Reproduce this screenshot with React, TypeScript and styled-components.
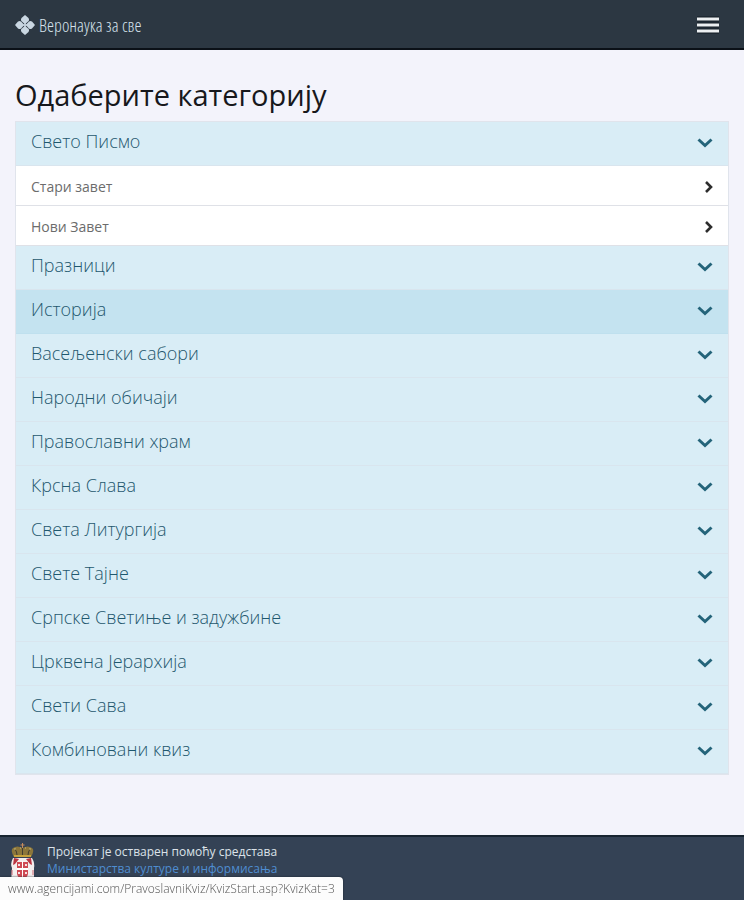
import React, { useState } from "react";
import styled, { createGlobalStyle } from "styled-components";

const GlobalStyle = createGlobalStyle`
  *, *::before, *::after { box-sizing: border-box; }
  body {
    margin: 0;
    background: #f3f3fb;
    color: #17181c;
    font-family: "Open Sans", "Noto Sans", sans-serif;
  }
  button { font: inherit; }
`;

const Page = styled.div`
  display: flex;
  flex-direction: column;
  min-height: 100vh;
`;

const Navbar = styled.header`
  display: flex;
  align-items: center;
  justify-content: space-between;
  height: 50px;
  padding: 2px 14px 0 15px;
  background: #2c3742;
  border-bottom: 2px solid #0b1017;
`;

const Brand = styled.a`
  display: flex;
  align-items: center;
  gap: 4px;
  color: #d5e1eb;
  font-family: "Open Sans Condensed Light", "Open Sans Condensed", "Open Sans", sans-serif;
  font-size: 18px;
  font-weight: 300;
  line-height: 20px;
  text-decoration: none;
  white-space: nowrap;
`;

const MenuButton = styled.button`
  display: flex;
  padding: 8px 10px;
  border: 0;
  background: none;
  cursor: pointer;
`;

const Main = styled.main`
  flex: 1;
  padding: 25px 15px 60px;
`;

const Title = styled.h1`
  margin: 0 0 6px;
  font-size: 29px;
  font-weight: 400;
  line-height: 40px;
`;

const Categories = styled.ul`
  margin: 0;
  padding: 0;
  border: 1px solid #e0e4ec;
  list-style: none;
`;

const Topics = styled.ul`
  margin: 0;
  padding: 0;
  list-style: none;
`;

const CategoryButton = styled.button<{ $active: boolean }>`
  display: flex;
  align-items: center;
  justify-content: space-between;
  width: 100%;
  height: 44px;
  padding: 0 15px 5px;
  border: 0;
  border-bottom: 1px solid ${(p) => (p.$active ? "#bfe0ee" : "#d9e5ee")};
  background: ${(p) => (p.$active ? "#c4e3f0" : "#d9edf6")};
  color: #1f586e;
  font-size: 18px;
  font-weight: 300;
  line-height: 24px;
  text-align: left;
  cursor: pointer;

  svg { color: #24647a; margin-top: 4px; }
`;

const TopicLink = styled.a`
  display: flex;
  align-items: center;
  justify-content: space-between;
  height: 40px;
  padding: 2px 15px 0;
  border-bottom: 1px solid #dfe1e7;
  background: #fff;
  color: #6c6c6c;
  font-size: 14px;
  line-height: 20px;
  text-decoration: none;

  svg { color: #2d2d2d; }
`;

const Footer = styled.footer`
  display: flex;
  align-items: flex-start;
  gap: 12px;
  height: 65px;
  padding: 6px 10px 0;
  border-top: 2px solid #172431;
  background: #344255;
  color: #dce2e9;
  font-size: 12px;
  line-height: 17px;

  p { margin: 0; }
  a { color: #4f8dd1; text-decoration: none; }
`;

const StatusBar = styled.div`
  position: fixed;
  left: 0;
  bottom: 0;
  height: 23px;
  padding: 0 8px;
  border-radius: 0 4px 0 0;
  background: #fcfcfc;
  box-shadow: 0 0 2px #18222d;
  color: #555;
  font-size: 12px;
  font-weight: 300;
  line-height: 23px;
  white-space: nowrap;
`;

const Cross = () => (
  <svg width="20" height="20" viewBox="0 0 20 20" aria-hidden="true">
    <g fill="#c9d6e1">
      <path d="M10 0 13.500 3Q15 5.500 12.500 7L10.600 8.800H9.400L7.500 7Q5 5.500 6.500 3Z" />
      <path d="M10 20 13.500 17Q15 14.500 12.500 13L10.600 11.200H9.400L7.500 13Q5 14.500 6.500 17Z" />
      <path d="M0 10 3 6.500Q5.500 5 7 7.500L8.800 9.400V10.600L7 12.500Q5.500 15 3 13.500Z" />
      <path d="M20 10 17 6.500Q14.500 5 13 7.500L11.200 9.400V10.600L13 12.500Q14.500 15 17 13.500Z" />
      <path d="M9.300 7h1.400v2.300H13v1.400h-2.300V13H9.300v-2.300H7V9.300h2.300Z" />
    </g>
  </svg>
);

const MenuIcon = () => (
  <svg width="24" height="20" viewBox="0 0 24 20" aria-hidden="true">
    <path d="M1 4h22M1 10h22M1 16h22" stroke="#111a22" strokeWidth="5" />
    <path d="M1 4h22M1 10h22M1 16h22" stroke="#edf0f2" strokeWidth="3" />
  </svg>
);

const ChevronDown = () => (
  <svg width="16" height="10" viewBox="0 0 16 10" fill="none" aria-hidden="true">
    <path d="m1.5 1.5 6.5 6 6.5-6" stroke="currentColor" strokeWidth="3" />
  </svg>
);

const ChevronRight = () => (
  <svg width="9" height="14" viewBox="0 0 9 14" fill="none" aria-hidden="true">
    <path d="m2 2 5 5-5 5" stroke="currentColor" strokeWidth="2.6" />
  </svg>
);

const Arms = () => (
  <svg width="25" height="40" viewBox="0 0 25 40" aria-hidden="true">
    <path d="M3 15Q0 21 2 25L1 40H24V25Q25 20 22 15Z" fill="#f4eeee" />
    <path d="m4 15 5 1-4 5-2 1Zm17 0-5 1 4 5 2 1Z" fill="#b93642" />
    <path d="M7 19H18V31Q17 35 12.500 38Q8 35 7 31Z" fill="#cf4a54" />
    <path d="M12 18h1v7h5v2h-5v11h-1V27H7v-2h5Z" fill="#fff" />
    <path d="M8 21h2v2H8zm7 0h2v2h-2zM8 29h2v2H8zm7 0h2v2h-2z" fill="#f6dfe1" />
    <path d="M2 27v5m21-5v5" stroke="#cc6b74" strokeWidth="1" />
    <path d="M4 14Q0 7 3 5 7 2 12.500 5 18 2 22 5q3 2-1 9Z" fill="#8c763b" />
    <path d="M5 6q2 3 2 6m5.500-7v8M20 6q-2 3-2 6" stroke="#423d30" fill="none" />
    <path d="M12.500 0v5M10.500 2h4" stroke="#c88d5c" strokeWidth="1" />
    <path d="M4 12h17v2H4z" fill="#c7a23c" />
    <path d="M4 6h2m4-1h1m4 0h1m3 1h2" stroke="#cdbc77" />
  </svg>
);

const categories = [
  "Свето Писмо", "Празници", "Историја", "Васељенски сабори",
  "Народни обичаји", "Православни храм", "Крсна Слава",
  "Света Литургија", "Свете Тајне", "Српске Светиње и задужбине",
  "Црквена Јерархија", "Свети Сава", "Комбиновани квиз",
];

const topics: Record<string, string[]> = {
  "Свето Писмо": ["Стари завет", "Нови Завет"],
};

export default function App() {
  const [open, setOpen] = useState("Свето Писмо");

  return (
    <>
      <GlobalStyle />
      <Page>
        <Navbar>
          <Brand href="#"><Cross />Веронаука за све</Brand>
          <MenuButton type="button" aria-label="Мени"><MenuIcon /></MenuButton>
        </Navbar>
        <Main>
          <Title>Одаберите категорију</Title>
          <Categories>
            {categories.map((name) => (
              <li key={name}>
                <CategoryButton
                  type="button"
                  $active={name === "Историја"}
                  aria-expanded={open === name}
                  onClick={() => setOpen(open === name ? "" : name)}
                >
                  {name}
                  <ChevronDown />
                </CategoryButton>
                {open === name && topics[name] && (
                  <Topics>
                    {topics[name].map((topic) => (
                      <li key={topic}>
                        <TopicLink href="#">{topic}<ChevronRight /></TopicLink>
                      </li>
                    ))}
                  </Topics>
                )}
              </li>
            ))}
          </Categories>
        </Main>
        <Footer>
          <Arms />
          <p>
            Пројекат је остварен помоћу средстава<br />
            <a href="#">Министарства културе и информисања</a>
          </p>
        </Footer>
      </Page>
      <StatusBar>www.agencijami.com/PravoslavniKviz/KvizStart.asp?KvizKat=3</StatusBar>
    </>
  );
}
